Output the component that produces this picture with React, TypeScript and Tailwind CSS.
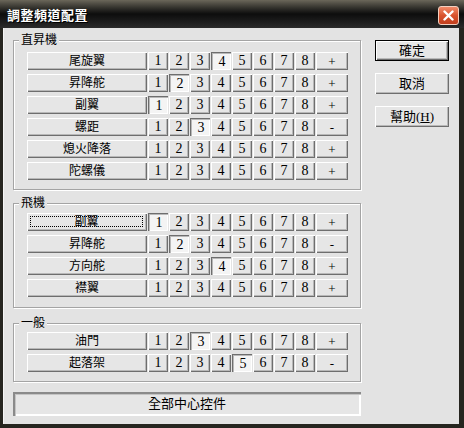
import React, { useState } from 'react'

type Row = { name: string; pressed: number; sign: '+' | '-'; focus?: boolean }

const HELI: Row[] = [
  { name: '尾旋翼', pressed: 4, sign: '+' },
  { name: '昇降舵', pressed: 2, sign: '+' },
  { name: '副翼', pressed: 1, sign: '+' },
  { name: '螺距', pressed: 3, sign: '-' },
  { name: '熄火降落', pressed: 0, sign: '+' },
  { name: '陀螺儀', pressed: 0, sign: '+' },
]

const PLANE: Row[] = [
  { name: '副翼', pressed: 1, sign: '+', focus: true },
  { name: '昇降舵', pressed: 2, sign: '-' },
  { name: '方向舵', pressed: 4, sign: '+' },
  { name: '襟翼', pressed: 0, sign: '+' },
]

const GENERAL: Row[] = [
  { name: '油門', pressed: 3, sign: '+' },
  { name: '起落架', pressed: 5, sign: '-' },
]

const RAISED =
  'bg-[#e6e6e6] shadow-[inset_1px_1px_0_#ffffff,inset_-1px_-1px_0_#6e6e6e,inset_-2px_-2px_0_#b8b8b8]'
const PRESSED =
  'bg-[#f4f4f4] shadow-[inset_1px_1px_0_#6e6e6e,inset_2px_2px_0_#b8b8b8,inset_-1px_-1px_0_#ffffff]'

function ChannelRow({ row }: { row: Row }) {
  const [pressed, setPressed] = useState(row.pressed)

  return (
    <div className="flex gap-[1px] h-[18px]">
      <button
        className={`w-[120px] h-full flex items-center justify-center text-[12px] leading-none ${RAISED}`}
      >
        {row.focus ? (
          <span className="flex-1 self-stretch m-[3px] mr-[4px] mb-[4px] border border-dotted border-black flex items-center justify-center">
            {row.name}
          </span>
        ) : (
          row.name
        )}
      </button>
      {[1, 2, 3, 4, 5, 6, 7, 8].map((n) => (
        <button
          key={n}
          onClick={() => setPressed(n)}
          className={`w-[20px] h-full flex items-center justify-center text-[14px] leading-none ${
            pressed === n ? `${PRESSED} pt-[2px] pl-[2px]` : RAISED
          }`}
        >
          {n}
        </button>
      ))}
      <button
        className={`w-[32px] h-full flex items-center justify-center text-[13px] leading-none ${RAISED}`}
      >
        {row.sign}
      </button>
    </div>
  )
}

function Group({
  title,
  rows,
  className,
}: {
  title: string
  rows: Row[]
  className: string
}) {
  return (
    <div
      className={`relative border border-[#a4a4a4] shadow-[inset_1px_1px_0_#ffffff,1px_1px_0_#ffffff] pl-[13px] flex flex-col gap-[4px] ${className}`}
    >
      <span className="absolute -top-[8px] left-[5px] px-[2px] bg-[#e3e3e3] text-[12px] leading-[15px]">
        {title}
      </span>
      {rows.map((r) => (
        <ChannelRow key={r.name + r.pressed} row={r} />
      ))}
    </div>
  )
}

export default function App() {
  return (
    <div className="w-[464px] h-[428px] flex flex-col bg-[#26251f] font-['Liberation_Serif','Noto_Sans_CJK_TC',serif] text-black select-none">
      {/* Title bar */}
      <div className="h-[28px] shrink-0 flex items-center justify-between pl-[7px] pr-[5px] bg-gradient-to-b from-[#6b675a] via-[#0d0d0d] to-[#2b2b2b]">
        <span className="text-white font-bold text-[13px] leading-none tracking-[0.5px] font-['Noto_Sans_CJK_TC',sans-serif] [text-shadow:1px_1px_0_#000]">
          調整頻道配置
        </span>
        <button className="w-[21px] h-[19px] mt-[2px] rounded-[3px] border border-[#f3d0c0] bg-gradient-to-b from-[#f08a68] via-[#d9532e] to-[#c23e1c] flex items-center justify-center">
          <svg width="11" height="11" viewBox="0 0 11 11">
            <path d="M1.5 1.5 L9.5 9.5 M9.5 1.5 L1.5 9.5" stroke="#fff" strokeWidth="2.4" strokeLinecap="round" />
          </svg>
        </button>
      </div>

      {/* Body */}
      <div className="flex-1 flex ml-[3px] mr-[5px] mb-[4px] bg-[#e3e3e3] border-l border-[#f4f4f4] pl-[9px]">
        <div className="w-[348px] flex flex-col pt-[12px]">
          <Group title="直昇機" rows={HELI} className="pt-[11px] pb-[9px]" />
          <Group title="飛機" rows={PLANE} className="mt-[13px] pt-[9px] pb-[10px]" />
          <Group title="一般" rows={GENERAL} className="mt-[15px] pt-[8px] pb-[9px]" />
          <button
            className={`mt-[10px] h-[24px] w-[348px] flex items-center justify-center text-[13px] bg-[#e6e6e6] shadow-[inset_2px_2px_0_#8a8a8a,inset_3px_3px_0_#c4c4c4,inset_-2px_-2px_0_#ffffff]`}
          >
            全部中心控件
          </button>
        </div>

        <div className="ml-[14px] w-[74px] flex flex-col gap-[12px] pt-[12px]">
          <button
            className={`h-[21px] border border-black flex items-center justify-center text-[13px] ${RAISED}`}
          >
            確定
          </button>
          <button className={`h-[21px] flex items-center justify-center text-[13px] ${RAISED}`}>
            取消
          </button>
          <button className={`h-[21px] flex items-center justify-center text-[13px] ${RAISED}`}>
            幫助(<span className="underline">H</span>)
          </button>
        </div>
      </div>
    </div>
  )
}
